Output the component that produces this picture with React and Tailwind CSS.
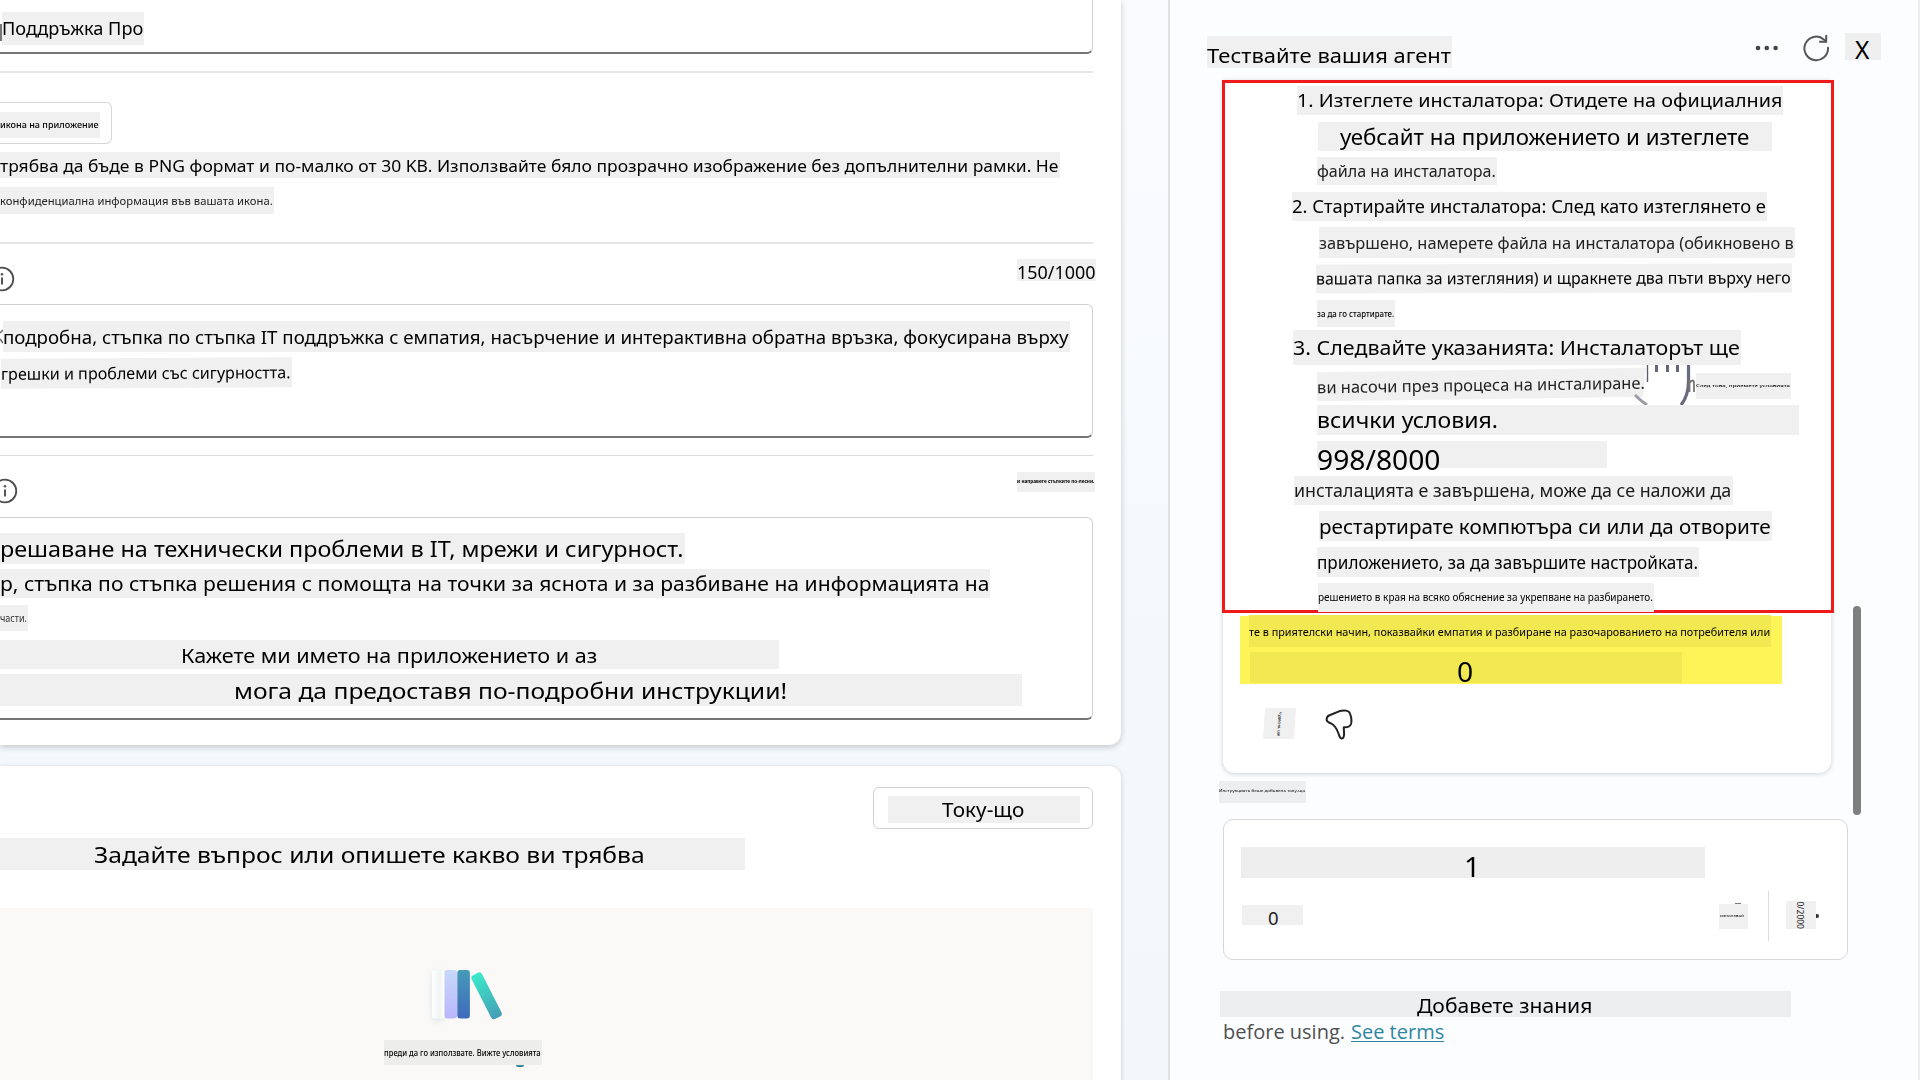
import { useLayoutEffect, useRef, useState } from "react";

/* Stretches one line of text horizontally so that it fills `to` pixels. */
function Fit({ to, className = "", children }) {
  const ref = useRef(null);
  const [k, setK] = useState(1);
  useLayoutEffect(() => {
    const measure = () => {
      const w = ref.current ? ref.current.offsetWidth : 0;
      if (w) setK(to / w);
    };
    measure();
    document.fonts.ready.then(measure);
  }, [to]);
  return (
    <span
      ref={ref}
      className={`inline-block shrink-0 origin-left whitespace-nowrap ${className}`}
      style={{ transform: `scaleX(${k})` }}
    >
      {children}
    </span>
  );
}

/* Grey label with one line of text inside. */
function Tag({ box, text, to, children }) {
  return (
    <div className={`flex shrink-0 items-start ${box}`}>
      <Fit to={to} className={text}>
        {children}
      </Fit>
    </div>
  );
}

function Info({ className }) {
  return (
    <svg className={className} width="26" height="26" viewBox="0 0 26 26" fill="none">
      <circle cx="13" cy="13" r="11.3" stroke="#4d4d4d" strokeWidth="1.8" />
      <path d="M13 11.6v7" stroke="#555" strokeWidth="2" />
      <circle cx="13" cy="8.2" r="1.3" fill="#555" />
    </svg>
  );
}

function Books() {
  return (
    <svg width="84" height="64" viewBox="0 0 84 64" className="ml-[424px]">
      <defs>
        <linearGradient id="b1" x1="0" y1="0" x2="1" y2="0">
          <stop offset="0" stopColor="#fff" />
          <stop offset=".6" stopColor="#f1f4f4" />
          <stop offset="1" stopColor="#fff" />
        </linearGradient>
        <linearGradient id="b2" x1="0" y1="0" x2="0" y2="1">
          <stop offset="0" stopColor="#c8d8fb" />
          <stop offset="1" stopColor="#bab6fb" />
        </linearGradient>
        <linearGradient id="b3" x1="0" y1="0" x2="0" y2="1">
          <stop offset="0" stopColor="#459bb8" />
          <stop offset="1" stopColor="#4169bd" />
        </linearGradient>
        <linearGradient id="b4" x1="0" y1="0" x2="0" y2="1">
          <stop offset="0" stopColor="#3beacb" />
          <stop offset="1" stopColor="#459db5" />
        </linearGradient>
        <filter id="bs" x="-50%" y="-20%" width="200%" height="150%">
          <feDropShadow dx="0" dy="2" stdDeviation="3" floodColor="#5f8b92" floodOpacity=".2" />
        </filter>
      </defs>
      <rect x="8" y="8" width="12.500" height="48.500" rx="3" fill="url(#b1)" filter="url(#bs)" />
      <rect x="20.500" y="8" width="12.500" height="48.500" rx="3" fill="url(#b2)" />
      <rect x="33.300" y="8" width="12.600" height="48.500" rx="3" fill="url(#b3)" />
      <rect x="-5.800" y="-24.500" width="11.600" height="49" rx="3.200" fill="url(#b4)" transform="translate(62.600 33.800) rotate(-27)" />
    </svg>
  );
}

function BuilderCard() {
  return (
    <section className="flex h-[745px] w-[1121px] shrink-0 flex-col overflow-hidden rounded-br-xl bg-white shadow-[0_2px_6px_rgba(0,0,0,0.2)]">
      <div className="flex h-[54px] w-[1093px] shrink-0 rounded-br-md border-r-[1.5px] border-b-2 border-r-[#d1d1d1] border-b-[#757575]">
        <div className="mt-6 h-[17px] w-[2px] shrink-0 bg-[#777]" />
        <Tag box="mt-3 h-[33px] w-[142px] bg-[#f0f0f0]" text="text-[17.8px] leading-[32px]" to={141}>
          Поддръжка Про
        </Tag>
      </div>
      <div className="mt-[17px] h-[2px] w-[1093px] shrink-0 bg-[#e6e6e6]" />
      <div className="mt-[29px] h-[42px] w-[112px] shrink-0 rounded-r-md border-[1.5px] border-l-0 border-[#d6d6d6]">
        <Tag box="mt-[9px] h-[26px] w-[100px] bg-[#f0f0f0]" text="text-[9.6px] font-medium leading-[25px]" to={99}>
          икона на приложение
        </Tag>
      </div>
      <Tag box="mt-2 h-[26px] w-[1060px] bg-[#f0f0f0]" text="text-[16.5px] leading-[28px]" to={1058}>
        трябва да бъде в PNG формат и по-малко от 30 KB. Използвайте бяло прозрачно изображение без допълнителни рамки. Не
      </Tag>
      <Tag box="mt-[9px] h-[27px] w-[274px] bg-[#f0f0f0]" text="text-[11.3px] leading-[28px] text-[#222]" to={273}>
        конфиденциална информация във вашата икона.
      </Tag>
      <div className="mt-7 h-[2px] w-[1093px] shrink-0 bg-[#e6e6e6]" />
      <div className="flex h-[60px] w-[1096px] shrink-0 items-start justify-between">
        <Info className="mt-[22px] -ml-[11px]" />
        <Tag box="mt-[15px] h-[22px] w-[79px] bg-[#f0f0f0]" text="text-[17.3px] leading-[28px]" to={79}>
          150/1000
        </Tag>
      </div>
      <div className="h-[133.5px] w-[1093px] shrink-0 rounded-r-md border-[1.5px] border-b-2 border-l-0 border-[#d1d1d1] border-b-[#757575]">
        <div className="flex">
          <svg width="3" height="16" viewBox="0 0 3 16" className="mt-[24px] shrink-0" fill="none" stroke="#666" strokeWidth="1.500">
            <path d="M3 1L0 4M0 10L3 14" />
          </svg>
          <Tag box="mt-[15.5px] h-[31px] w-[1067px] bg-[#f0f0f0]" text="text-[17.3px] leading-[34px]" to={1066}>
            подробна, стъпка по стъпка IT поддръжка с емпатия, насърчение и интерактивна обратна връзка, фокусирана върху
          </Tag>
        </div>
        <Tag box="mt-[6px] ml-px h-[30px] w-[291px] -rotate-[0.3deg] bg-[#f0f0f0]" text="text-[16.3px] leading-[31px]" to={290}>
          грешки и проблеми със сигурността.
        </Tag>
      </div>
      <div className="mt-[17.5px] h-px w-[1093px] shrink-0 bg-[#dcdcdc]" />
      <div className="flex h-[60.5px] w-[1095px] shrink-0 items-start justify-between">
        <Info className="mt-[22px] -ml-[8px]" />
        <Tag box="mt-4 h-[20px] w-[78px] bg-[#f0f0f0]" text="text-[5px] font-bold leading-[19px]" to={77}>
          и направете стъпките по-лесни.
        </Tag>
      </div>
      <div className="h-[203.5px] w-[1093px] shrink-0 rounded-r-md border-[1.5px] border-b-2 border-l-0 border-[#d1d1d1] border-b-[#757575]">
        <Tag box="mt-[15px] h-[31px] w-[685px] bg-[#f0f0f0]" text="text-[21.5px] leading-[32px]" to={683}>
          решаване на технически проблеми в IT, мрежи и сигурност.
        </Tag>
        <Tag box="mt-[5px] h-[29px] w-[990px] bg-[#f0f0f0]" text="text-[19.5px] leading-[30px]" to={989}>
          р, стъпка по стъпка решения с помощта на точки за яснота и за разбиване на информацията на
        </Tag>
        <Tag box="mt-[7px] h-[26px] w-[28px] bg-[#f0f0f0]" text="text-[10px] leading-[27px] text-[#333]" to={27}>
          части.
        </Tag>
        <Tag box="mt-[9px] h-[29px] w-[779px] bg-[#f0f0f0] pl-[181px]" text="text-[20px] leading-[31px]" to={416}>
          Кажете ми името на приложението и аз
        </Tag>
        <Tag box="mt-[5px] h-[32px] w-[1022px] bg-[#f0f0f0] pl-[234px]" text="text-[22px] leading-[33px]" to={553}>
          мога да предоставя по-подробни инструкции!
        </Tag>
      </div>
    </section>
  );
}

function KnowledgeCard() {
  return (
    <section className="mt-[21px] flex h-[340px] w-[1121px] shrink-0 flex-col rounded-tr-xl bg-white shadow-[0_1px_5px_rgba(0,0,0,0.18)]">
      <div className="mt-[21px] ml-[873px] h-[42px] w-[220px] shrink-0 rounded-md border-[1.5px] border-[#d1d1d1]">
        <Tag box="mt-[7.5px] ml-[13.5px] h-[27px] w-[192px] bg-[#f0f0f0] pl-[54px]" text="text-[20px] leading-[28px]" to={82}>
          Току-що
        </Tag>
      </div>
      <Tag box="mt-[9px] h-[32px] w-[745px] bg-[#f0f0f0] pl-[94px]" text="text-[22px] leading-[32px]" to={551}>
        Задайте въпрос или опишете какво ви трябва
      </Tag>
      <div className="mt-[38px] h-[180px] w-[1093px] shrink-0 bg-[#faf9f8] pt-[54px]">
        <Books />
        <div className="mt-[14px] ml-[384px] flex w-[158px] flex-col">
          <Tag box="h-[25px] w-[158px] bg-[#ededec]" text="text-[8.2px] font-medium leading-[25px]" to={157}>
            преди да го използвате. Вижте условията
          </Tag>
          <div className="ml-[132px] h-[1.5px] w-[8px] rounded-b-full bg-[#3a8797]" />
        </div>
      </div>
    </section>
  );
}

function HandCursor() {
  return (
    <svg width="70" height="40" viewBox="0 0 70 40" className="absolute top-[285px] left-[408px] z-20" fill="none">
      <path d="M15 0H57V14C57 26 52 34 48 40H18L12 34Z" fill="#fff" />
      <path d="M16.500 0V17" stroke="#5c5c70" strokeWidth="1.400" />
      <path d="M25.500 0V7M36.500 0V7M46.500 0V7" stroke="#66667a" strokeWidth="3" />
      <path d="M57.500 0V16C57.500 28 55 34 50 40" stroke="#6a6a80" strokeWidth="3.200" />
      <path d="M4 30Q10 36 16 40" stroke="#9c9ca8" strokeWidth="3" />
      <path d="M58.500 15v12M58.500 18Q62.500 13 63 18V27" stroke="#777" strokeWidth="1.800" />
    </svg>
  );
}

function ChatCard() {
  return (
    <div className="relative ml-[53px] flex h-[693px] w-[608px] shrink-0 flex-col rounded-b-xl bg-white shadow-[0_1px_5px_rgba(0,0,0,0.18)]">
      <div className="absolute top-0 -left-px h-[533px] w-[612px] border-[3px] border-[#ef1a1a]" />
      <HandCursor />
      <div className="relative z-10 -ml-px flex flex-col">
        <Tag box="mt-[6px] ml-[75px] h-[29px] w-[486px] bg-[#f0f0f0]" text="text-[18.4px] leading-[28px]" to={485}>
          1. Изтеглете инсталатора: Отидете на официалния
        </Tag>
        <Tag box="mt-[7px] ml-[96px] h-[29px] w-[454px] bg-[#f0f0f0] pl-[22px]" text="text-[21px] leading-[31px]" to={409}>
          уебсайт на приложението и изтеглете
        </Tag>
        <Tag box="mt-[6px] ml-[95px] h-[28px] w-[180px] bg-[#f0f0f0]" text="text-[16px] leading-[28px] text-[#222]" to={179}>
          файла на инсталатора.
        </Tag>
        <Tag box="mt-[7px] ml-[70px] h-[29px] w-[475px] bg-[#f0f0f0]" text="text-[17.8px] leading-[29px]" to={474}>
          2. Стартирайте инсталатора: След като изтеглянето е
        </Tag>
        <Tag box="mt-[6px] ml-[97px] h-[31px] w-[476px] bg-[#f0f0f0]" text="text-[16.5px] leading-[32px] text-[#222]" to={475}>
          завършено, намерете файла на инсталатора (обикновено в
        </Tag>
        <Tag box="mt-[6px] ml-[94px] h-[29px] w-[476px] -rotate-[0.1deg] bg-[#f0f0f0]" text="text-[16.5px] leading-[28px]" to={475}>
          вашата папка за изтегляния) и щракнете два пъти върху него
        </Tag>
        <Tag box="mt-[7px] ml-[95px] h-[27px] w-[78px] bg-[#f0f0f0]" text="text-[8.4px] font-medium leading-[27px]" to={77}>
          за да го стартирате.
        </Tag>
        <Tag box="mt-[3px] ml-[71px] h-[35px] w-[448px] bg-[#f0f0f0]" text="text-[20.5px] leading-[35px]" to={447}>
          3. Следвайте указанията: Инсталаторът ще
        </Tag>
        <div className="relative z-30 flex h-10 items-start">
          <Tag box="mt-[5px] ml-[95px] h-[29px] w-[329px] -rotate-[0.8deg] bg-[#f0f0f0]" text="text-[16.5px] leading-[29px] text-[#222]" to={328}>
            ви насочи през процеса на инсталиране.
          </Tag>
          <Tag box="mt-[8px] ml-[50px] h-[26px] w-[95px] bg-[#f0f0f0]" text="text-[4px] font-medium leading-[25px]" to={94}>
            След това, приемете условията
          </Tag>
        </div>
        <Tag box="ml-[95px] h-[30px] w-[482px] bg-[#f0f0f0]" text="text-[21.5px] leading-[30px]" to={181}>
          всички условия.
        </Tag>
        <Tag box="mt-[6px] ml-[95px] h-[27px] w-[290px] bg-[#f0f0f0]" text="text-[26.4px] leading-[38px]" to={124}>
          998/8000
        </Tag>
        <Tag box="mt-2 ml-[72px] h-[29px] w-[439px] bg-[#f0f0f0]" text="text-[17.6px] leading-[28px] text-[#1a1a1a]" to={437}>
          инсталацията е завършена, може да се наложи да
        </Tag>
        <Tag box="mt-[6px] ml-[97px] h-[30px] w-[453px] bg-[#f0f0f0]" text="text-[20px] leading-[32px]" to={452}>
          рестартирате компютъра си или да отворите
        </Tag>
        <Tag box="mt-[6px] ml-[95px] h-[30px] w-[382px] bg-[#f0f0f0]" text="text-[17.8px] leading-[30px]" to={381}>
          приложението, за да завършите настройката.
        </Tag>
        <Tag box="mt-[6px] ml-[96px] h-[29px] w-[336px] bg-[#f0f0f0]" text="text-[10.8px] leading-[27px]" to={335}>
          решението в края на всяко обяснение за укрепване на разбирането.
        </Tag>
        <div className="mt-[4px] ml-[18px] h-[68px] w-[542px] bg-[#fff457]">
          <Tag box="-mt-px ml-[9px] h-[32px] w-[522px] bg-[#f2e852]" text="text-[11px] leading-[33px]" to={521}>
            те в приятелски начин, показвайки емпатия и разбиране на разочарованието на потребителя или
          </Tag>
          <Tag box="mt-[5px] ml-[10px] h-[31px] w-[432px] bg-[#f2e852] pl-[207px]" text="text-[26.5px] leading-[40px]" to={16}>
            0
          </Tag>
        </div>
        <div className="mt-[24px] ml-[41px] flex h-[32px] items-start">
          <div className="flex h-[31px] w-[33px] items-center justify-center overflow-hidden bg-[#f0f0f0] [clip-path:polygon(6%_0,100%_0,94%_100%,0_100%)]">
            <span className="shrink-0 rotate-[94deg] text-[4px] font-medium whitespace-nowrap">Чудесно, ще</span>
          </div>
          <svg width="30" height="34" viewBox="0 0 30 34" className="ml-[28px]" fill="none">
            <path
              d="M5 7.500L15 3.300C20 1.800 25 2.300 26 5.500C27.200 9 28 13 27 16C26 18.500 23 19.600 19.800 19.300C19.700 19.300 19.900 22 20.100 25C20.200 28 19.500 30.600 17.900 30.600C15.800 30.800 15.300 27.600 14.300 25C12.900 21.300 10.500 17 6.500 15.200C4 14.200 2.600 13.600 2.600 11.800C2.600 9.500 3.400 8.200 5 7.500Z"
              stroke="#222"
              strokeWidth="2"
              strokeLinejoin="round"
            />
          </svg>
        </div>
      </div>
    </div>
  );
}

function PromptBox() {
  return (
    <div className="mt-4 ml-[53px] flex h-[141px] w-[625px] shrink-0 flex-col rounded-[10px] border-[1.5px] border-[#d9d7d6] bg-white">
      <Tag box="mt-[27px] ml-[17px] h-[31px] w-[464px] bg-[#eeeeee] pl-[223px]" text="text-[27px] leading-[39px]" to={16}>
        1
      </Tag>
      <div className="mt-[13px] ml-[18px] flex h-[50px] items-start">
        <Tag box="mt-[14px] h-[20px] w-[61px] bg-[#f0f0f0] pl-[26px]" text="text-[18.5px] leading-[25px] text-[#222]" to={11}>
          0
        </Tag>
        <div className="ml-[416px] flex w-[29px] flex-col items-center pt-[12px]">
          <div className="ml-[8px] h-px w-[6px] bg-[#777]" />
          <Tag box="h-[25px] w-[29px] bg-[#f0f0f0] pl-px" text="text-[3.5px] leading-[23px]" to={24}>
            използвай
          </Tag>
        </div>
        <div className="ml-[19.5px] h-[50px] w-[1.5px] bg-[#dcdcdc]" />
        <div className="mt-[10px] ml-[17px] flex h-[28px] w-[30px] items-center justify-center bg-[#f0f0f0]">
          <span className="-ml-[3px] shrink-0 rotate-90 text-[8.5px] leading-none whitespace-nowrap text-[#222]">0/2000</span>
        </div>
        <div className="mt-[23px] h-[4px] w-[3px] rounded-r-full bg-[#333]" />
      </div>
    </div>
  );
}

function TestPane() {
  return (
    <aside className="relative flex h-[1080px] w-[752px] shrink-0 flex-col border-x-2 border-l-[#e2e2e2] border-r-[#eeeeee] bg-[#fcfdff]">
      <header className="flex h-[80px] shrink-0 items-start">
        <Tag box="mt-9 ml-[37px] h-[32px] w-[245px] bg-[#f0f0f0]" text="text-[20.5px] leading-[38px]" to={244}>
          Тествайте вашия агент
        </Tag>
        <svg width="24" height="6" viewBox="0 0 24 6" className="mt-[45px] ml-[303px]" fill="#444">
          <circle cx="3" cy="3" r="2.300" />
          <circle cx="11.800" cy="3" r="2.300" />
          <circle cx="20.600" cy="3" r="2.300" />
        </svg>
        <svg width="28" height="28" viewBox="0 0 28 28" className="mt-[34px] ml-[23px]" fill="none" stroke="#555" strokeWidth="2" strokeLinecap="round">
          <path d="M26 13.700A11.800 11.800 0 1 1 21.800 5.400L23.800 7.600" />
          <path d="M24.200 1.800V7.700H18" strokeLinejoin="round" />
        </svg>
        <Tag box="mt-[33px] ml-[15px] h-[27px] w-[36px] bg-[#efefef] pl-[10px]" text="text-[24.5px] leading-[34px]" to={14}>
          X
        </Tag>
      </header>
      <ChatCard />
      <Tag box="mt-2 ml-[49px] h-[22px] w-[87px] bg-[#edeef0]" text="text-[3px] leading-[21px]" to={86}>
        Инструкцията беше добавена току-що
      </Tag>
      <PromptBox />
      <Tag box="mt-[31px] ml-[50px] h-[26px] w-[571px] bg-[#edeef0] pl-[197px]" text="text-[20px] leading-[30px]" to={175}>
        Добавете знания
      </Tag>
      <p className="mt-[2px] ml-[53px] flex h-[26px] items-start font-['Open_Sans',sans-serif] text-[20px] leading-[26px]">
        <span className="flex w-[128px] text-[#505050]">
          <Fit to={122}>before using.</Fit>
        </span>
        <a href="#terms" className="flex w-[93px] text-[#2f86a0]">
          <Fit to={93} className="underline decoration-1 underline-offset-[2px]">
            See terms
          </Fit>
        </a>
      </p>
      <div className="absolute top-[606px] right-[57px] h-[209px] w-[8px] rounded-full bg-[#7f7f7f]" />
    </aside>
  );
}

export default function App() {
  return (
    <div className="flex h-[1080px] w-[1920px] overflow-hidden bg-[#f5f8fc] font-['Noto_Sans',sans-serif] text-black">
      <main className="flex w-[1168px] shrink-0 flex-col bg-linear-to-b from-[#fafbfe] via-[#f5f9fd] to-[#f2f7fb]">
        <BuilderCard />
        <KnowledgeCard />
      </main>
      <TestPane />
    </div>
  );
}
